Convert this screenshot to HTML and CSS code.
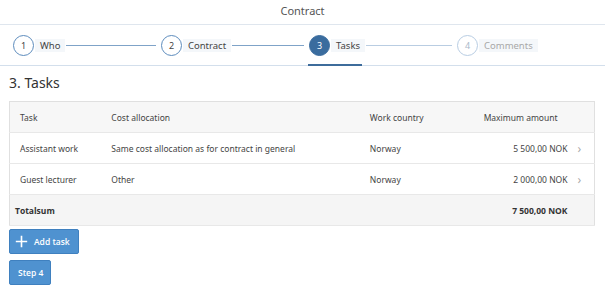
FILE: index.html
```html
<!DOCTYPE html>
<html>
<head>
<meta charset="utf-8">
<link rel="stylesheet" href="styles.css">
</head>
<body>
<header class="topbar">Contract</header>
<nav class="stepper">
  <div class="step done"><span class="circle">1</span><span class="label">Who</span><span class="line"></span></div>
  <div class="step done"><span class="circle">2</span><span class="label">Contract</span><span class="line"></span></div>
  <div class="step active"><span class="circle">3</span><span class="label">Tasks</span><span class="line light"></span></div>
  <div class="step todo"><span class="circle">4</span><span class="label">Comments</span></div>
</nav>
<main class="content">
  <h2 class="title">3. Tasks</h2>
  <table class="tasks">
    <thead>
      <tr><th class="c-task">Task</th><th class="c-cost">Cost allocation</th><th class="c-country">Work country</th><th class="c-amount">Maximum amount</th><th class="c-nav"></th></tr>
    </thead>
    <tbody>
      <tr><td class="c-task">Assistant work</td><td>Same cost allocation as for contract in general</td><td>Norway</td><td class="num">5 500,00 NOK</td><td class="c-nav">&#x203A;</td></tr>
      <tr><td class="c-task">Guest lecturer</td><td>Other</td><td>Norway</td><td class="num">2 000,00 NOK</td><td class="c-nav">&#x203A;</td></tr>
    </tbody>
    <tfoot>
      <tr><td class="total-label" colspan="3">Totalsum</td><td class="num total">7 500,00 NOK</td><td></td></tr>
    </tfoot>
  </table>
  <div class="actions">
    <button class="btn btn-add"><svg class="plus" viewBox="0 0 16 16" width="13" height="13"><path d="M8 1v14M1 8h14" stroke="#fff" stroke-width="2"/></svg>Add task</button>
    <button class="btn">Step 4</button>
  </div>
</main>
</body>
</html>
```
FILE: styles.css
```css
* { box-sizing: border-box; }
html, body { margin: 0; padding: 0; background: #fff; }
body { font-family: "Noto Sans", "Open Sans", sans-serif; color: #333; width: 605px; height: 291px; overflow: hidden; }

.topbar {
  height: 25px;
  border-bottom: 1px solid #dfe6ee;
  text-align: center;
  font-size: 11px;
  line-height: 21px;
  color: #555;
}

.stepper {
  display: flex;
  height: 41px;
  padding-left: 13px;
  border-bottom: 1px solid #d3dfec;
  align-items: center;
}
.step {
  flex: 0 0 148px;
  display: flex;
  align-items: center;
  height: 100%;
  position: relative;
}
.step.active::after {
  content: "";
  position: absolute;
  left: -1px; bottom: -1px;
  width: 54px; height: 2px;
  background: #3d6c9b;
}
.circle {
  width: 21px; height: 21px;
  border-radius: 50%;
  border: 1px solid #5d8cbd;
  display: flex; align-items: center; justify-content: center;
  font-size: 9px;
  color: #444;
  flex: none;
}
.label {
  font-size: 9.5px;
  color: #444;
  background: #f4f7fa;
  padding: 0 5px 0 5px;
  line-height: 13px;
  margin-left: 1px;
}
.line {
  flex: 1;
  height: 1px;
  background: #7fa3c8;
  margin: 0 5px 0 1px;
}
.line.light { background: #b9cde2; }
.step.active .circle { background: #3a6c9e; border-color: #3a6c9e; color: #fff; }
.step.todo .circle { border-color: #b8cde3; color: #a9b9ca; }
.step.todo .label { color: #a8a8a8; }

.content { padding: 0 10px 0 9px; }
.title {
  margin: 0;
  font-weight: normal;
  font-size: 14px;
  color: #333;
  height: 35px;
  line-height: 34px;
}

.tasks {
  width: 586px;
  border-collapse: collapse;
  border: 1px solid #e0e0e0;
  font-size: 8.5px;
  color: #444;
}
.tasks th, .tasks td {
  height: 31px;
  padding: 0;
  text-align: left;
  font-weight: normal;
  border-bottom: 1px solid #e8e8e8;
}
.tasks thead tr { background: #f7f7f7; }
.tasks tfoot tr { background: #f5f5f5; }
.tasks .c-task { padding-left: 10px; width: 102px; }
.c-cost { width: 259px; }
.c-country { width: 114px; }
.c-amount { width: 84px; }
.tasks td.num { text-align: right; }
.tasks .c-nav { width: 27px; text-align: center; color: #aaa; font-size: 12px; padding-right: 3px; }
.tasks .total-label { padding-left: 5px; font-weight: bold; font-family: "Open Sans", sans-serif; color: #333; }
.tasks .total { font-weight: bold; font-family: "Open Sans", sans-serif; color: #333; }

.actions {
  display: flex;
  flex-direction: column;
  align-items: flex-start;
  gap: 6px;
  margin-top: 3px;
}
.btn {
  height: 25px;
  background: #4f92d0;
  border: 1px solid #3f80bf;
  border-radius: 2px;
  color: #fff;
  font-family: "Open Sans", sans-serif;
  font-size: 8.5px;
  font-weight: 600;
  padding: 0 7px 0 8px;
  display: flex;
  align-items: center;
  gap: 6px;
}
.btn-add { padding-left: 5px; padding-right: 8px; }
```
